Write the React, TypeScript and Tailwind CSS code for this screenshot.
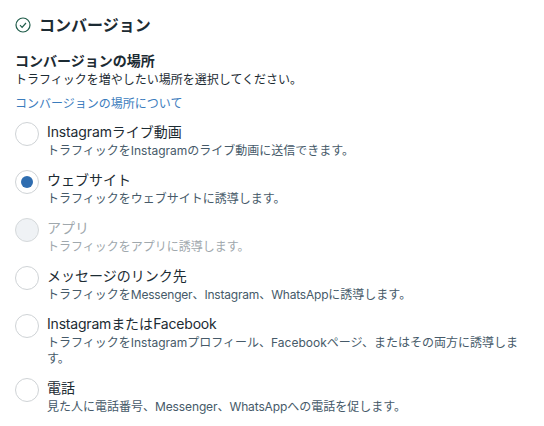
import type { ReactNode } from "react";
const F = "font-['Inter','Noto_Sans_CJK_JP',sans-serif]";
const N = ({ children }: { children: ReactNode }) => <span className="tracking-[-0.2px]">{children}</span>;
const S = ({ children }: { children: ReactNode }) => <span className="tracking-[-0.12px]">{children}</span>;
type Row = { t: ReactNode; d: ReactNode; on?: boolean; off?: boolean };
const rows: Row[] = [
  { t: <><S>Instagram</S>ライブ動画</>, d: "トラフィックをInstagramのライブ動画に送信できます。" },
  { t: "ウェブサイト", d: "トラフィックをウェブサイトに誘導します。", on: true },
  { t: "アプリ", d: "トラフィックをアプリに誘導します。", off: true },
  { t: "メッセージのリンク先", d: <>トラフィックを<N>Messenger</N>、<N>Instagram</N>、<N>WhatsApp</N>に誘導します。</> },
  { t: <><N>Instagram</N>または<N>Facebook</N></>, d: "トラフィックをInstagramプロフィール、Facebookページ、またはその両方に誘導します。" },
  { t: "電話", d: <>見た人に電話番号、<S>Messenger</S>、<S>WhatsApp</S>への電話を促します。</> },
];
export default function App() {
  return (
    <div className={`w-[544px] h-[426px] overflow-hidden bg-white pl-[15px] pr-[20px] pt-[13px] text-[#1c2b33] ${F}`}>
      <div className="flex items-center gap-[8px] h-[24px]">
        <svg width="16" height="16" viewBox="0 0 16 16" fill="none" stroke="#1f5c4a" strokeWidth="1.2"><circle cx="8" cy="8" r="7"/><path d="M5 8.2l2.1 2.1L11 6"/></svg>
        <div className="text-[16px] font-bold leading-[24px]">コンバージョン</div>
      </div>
      <div className="mt-[15px] text-[14px] font-semibold leading-[18px]">コンバージョンの場所</div>
      <div className="mt-[1px] text-[12px] leading-[18px]">トラフィックを増やしたい場所を選択してください。</div>
      <div className="mt-[6px] text-[12px] leading-[18px] text-[#3b7cbd]">コンバージョンの場所について</div>
      <div className="mt-[9px] flex flex-col">
        {rows.map((r, i) => (
          <div key={i} className="flex gap-[8px] pb-[11px]">
            <div className={`w-[24px] h-[24px] shrink-0 rounded-full border flex items-center justify-center ${r.off ? "border-[#d5d9db] bg-[#eff2f5]" : "border-[#cfd3d6] bg-white"}`}>
              {r.on && <div className="w-[12px] h-[12px] rounded-full bg-[#2f6db0]" />}
            </div>
            <div className={r.off ? "text-[#a0a8ad]" : ""}>
              <div className="text-[14px] leading-[20px] mb-[1px]">{r.t}</div>
              <div className={`text-[12px] leading-[16px] ${r.off ? "" : "text-[#465a69]"}`}>{r.d}</div>
            </div>
          </div>
        ))}
      </div>
    </div>
  );
}
